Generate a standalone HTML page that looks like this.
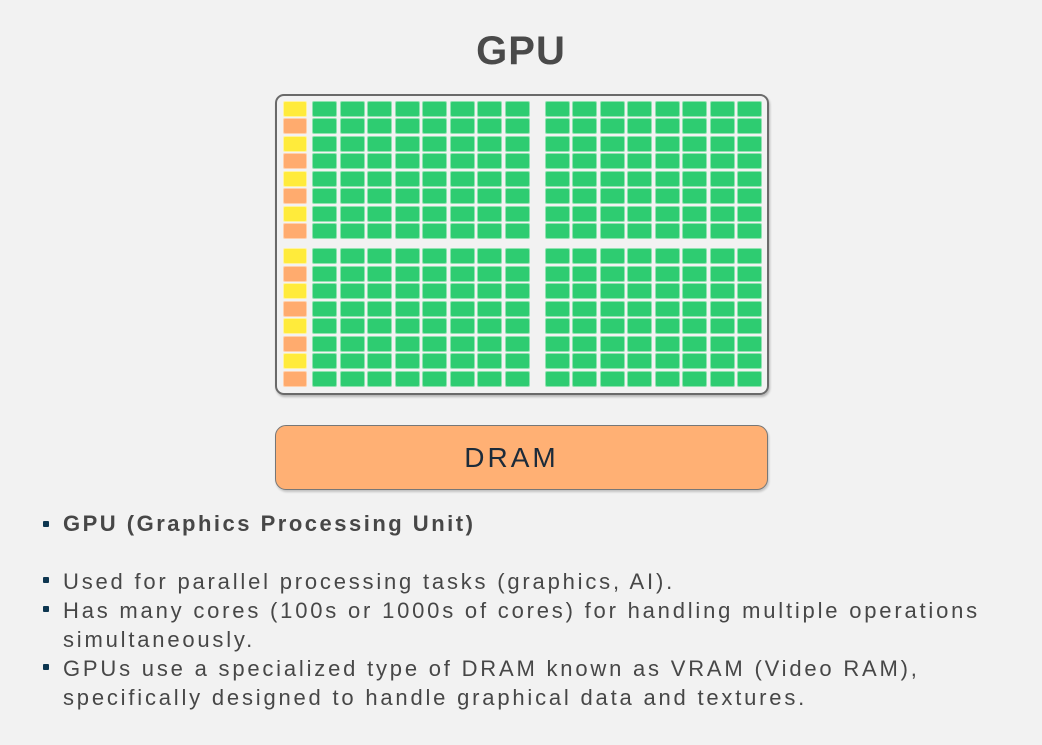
<!DOCTYPE html>
<html><head><meta charset="utf-8"><style>
html,body{margin:0;padding:0}
body{width:1042px;height:745px;background:#f2f2f2;position:relative;overflow:hidden;font-family:"Liberation Sans",sans-serif;color:#474747}
.title{position:absolute;left:0;width:1042px;top:29px;text-align:center;font-size:40px;font-weight:bold;color:#4a4a4a;letter-spacing:1px}
.box{position:absolute;left:275px;top:94px;width:490px;height:297px;border:2px solid #6a6a6a;border-radius:9px;box-shadow:1px 2px 2px rgba(0,0,0,.25)}
.c{position:absolute;height:14px;border-radius:1px}
.g{background:#2ecc71;box-shadow:0 0 0 1px #8fe3b0}
.y{background:#ffeb3b;box-shadow:0 0 0 1px #fff3a0}
.o{background:#ffab6e;box-shadow:0 0 0 1px #ffd0ad}
.dram{position:absolute;left:275px;top:425px;width:471px;padding-right:20px;height:63px;background:#ffb074;border:1.5px solid #777;border-radius:11px;box-shadow:1px 2px 2px rgba(0,0,0,.2);text-align:center;line-height:63px;font-size:28px;color:#1c2b3a;letter-spacing:3px}
.t{position:absolute;left:63px;font-size:22px;white-space:nowrap;letter-spacing:2.8px;line-height:29px}
.b{position:absolute;left:43px;width:6px;height:6px;background:#0d3650;border-radius:1px}
</style></head><body>
<div class="title">GPU</div>
<div class="box"></div>
<div id="grid"></div>
<div class="dram">DRAM</div>

<div class="b" style="top:521px"></div>
<div class="t" style="top:509px;font-weight:bold;letter-spacing:2.5px">GPU (Graphics Processing Unit)</div>
<div class="b" style="top:577px"></div>
<div class="t" style="top:567px">Used for parallel processing tasks (graphics, AI).</div>
<div class="b" style="top:606px"></div>
<div class="t" style="top:596px">Has many cores (100s or 1000s of cores) for handling multiple operations</div>
<div class="t" style="top:625px">simultaneously.</div>
<div class="b" style="top:664px"></div>
<div class="t" style="top:654px">GPUs use a specialized type of DRAM known as VRAM (Video RAM),</div>
<div class="t" style="top:683px">specifically designed to handle graphical data and textures.</div>

<script>
var g=document.getElementById('grid'),h='';
var cols=[313,341,368,396,423,451,478,506,545.5,573,600.5,628,655.5,683,710.5,738];
var blocks=[101.5,249];
for(var b=0;b<2;b++){for(var r=0;r<8;r++){var y=blocks[b]+r*17.5;
h+='<div class="c '+(r%2?'o':'y')+'" style="left:284px;width:22px;top:'+y+'px"></div>';
for(var i=0;i<16;i++){h+='<div class="c g" style="left:'+cols[i]+'px;width:23px;top:'+y+'px"></div>';}}}
g.innerHTML=h;
</script>
</body></html>
